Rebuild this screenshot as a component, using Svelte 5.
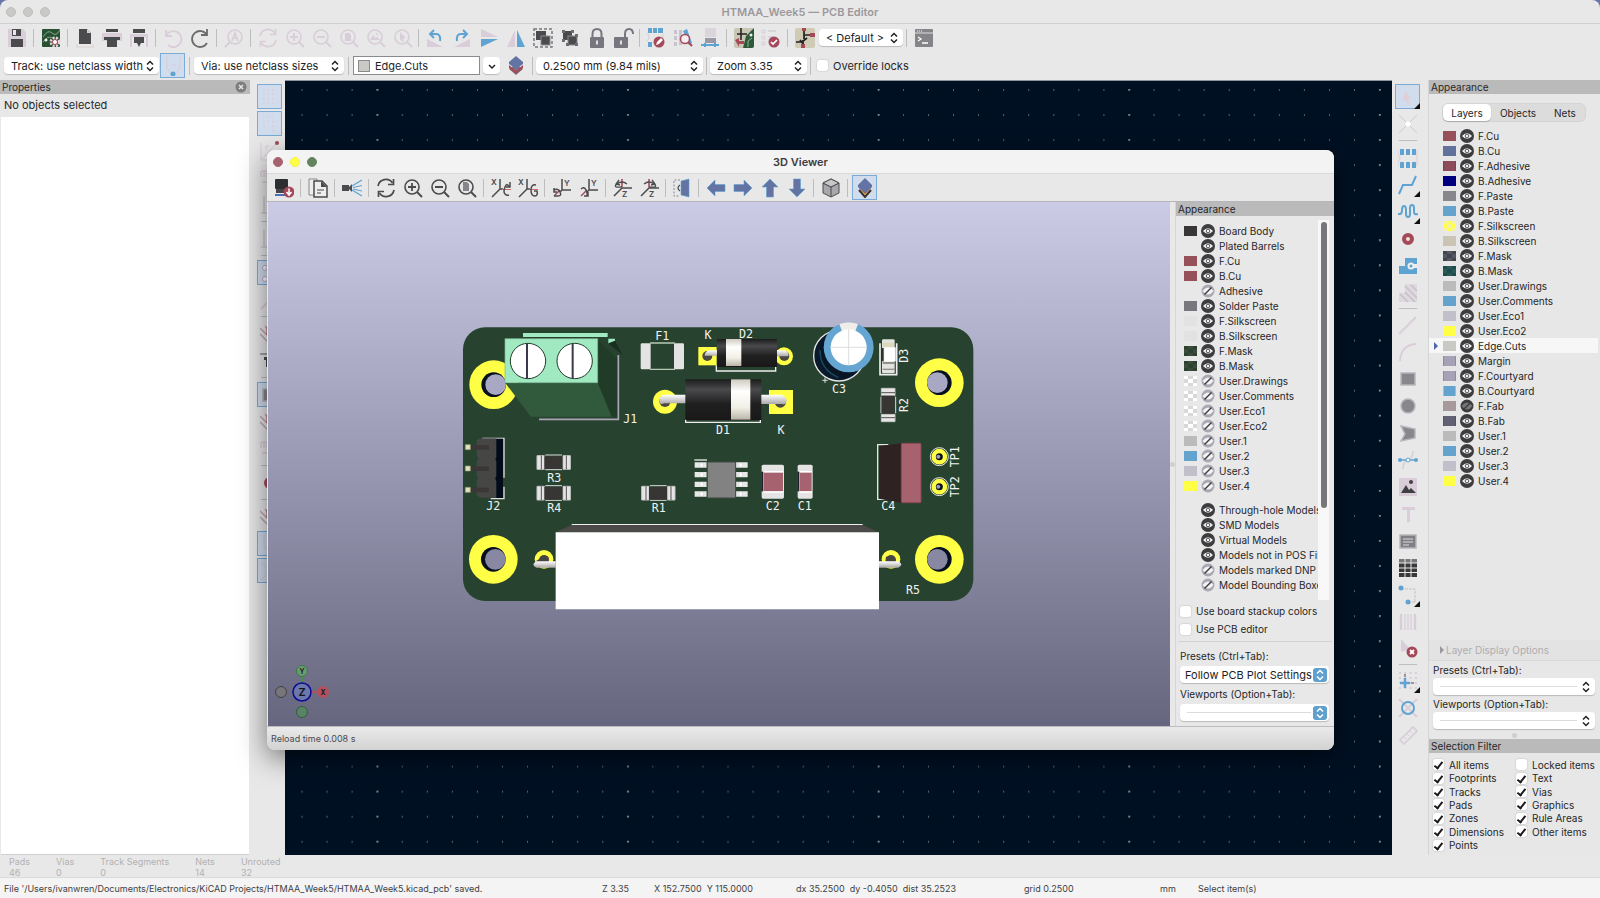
<script lang="ts">
  type Layer = { name: string; color?: string; edge?: string; pattern?: string; hidden?: boolean; active?: boolean };

  const DARK = '#4b4b4d';
  const PALE = '#d8cdd8';
  const BLUE = '#5fa3d2';
  const NAVY = '#6273a4';
  const RED = '#a5495a';

  const lens = (color: string, inner: string) =>
    `<circle cx="9" cy="9" r="7" fill="none" stroke="${color}" stroke-width="1.6"/><path d="M14 14l5 5" stroke="${color}" stroke-width="2"/>${inner}`;
  const arrows = (color: string) =>
    `<path d="M2 8a8 8 0 0 1 14.500-3M18 12a8 8 0 0 1-14.500 3" fill="none" stroke="${color}" stroke-width="1.700"/><path d="M17.500 1v5.500H12M2.500 19v-5.500H8" fill="none" stroke="${color}" stroke-width="1.700"/>`;
  const axes = (letter: string, x: number, y: number, lines: string, curl: string) =>
    `<path d="${lines}" fill="none" stroke="${DARK}" stroke-width="1.500"/><text x="${x}" y="${y}" font-size="8" font-weight="600" font-family="Inter, sans-serif" fill="${DARK}">${letter}</text>${curl}`;
  const curlX = (flip: boolean) =>
    `<path d="M11 11.500h9" stroke="#d06a6a" stroke-width="1.200"/><path d="${flip ? 'M18 7q-5-1-5 5t4 6q3 0 2-5h-3' : 'M18 9q-2-5-4 0t0 7 4 1M19 4v5h-4'}" fill="none" stroke="${DARK}" stroke-width="1.500"/>`;
  const curlY = (flip: boolean) =>
    `<path d="M2 18l6-6" stroke="${RED}" stroke-width="1.400"/><path d="${flip ? 'M2 11q3-3 5 1t1 6M5 18h4v-4' : 'M2 12q4-2 6 2t-2 4l-4 0M2 10v4h3'}" fill="none" stroke="${DARK}" stroke-width="1.500"/>`;
  const curlZ = (flip: boolean) =>
    `<path d="M9 1v8" stroke="${RED}" stroke-width="1.600"/><path d="${flip ? 'M4 6q5-4 10 0t-5 3M12 2l3 4-4 1' : 'M14 6q-5-4-10 0t5 3M6 2L3 6l4 1'}" fill="none" stroke="${DARK}" stroke-width="1.300"/>`;
  const bigArrow = (turn: number) =>
    `<path transform="rotate(${turn} 10 10)" d="M1 10l8-8v4.500h10v7H9V18z" fill="${NAVY}" stroke="${BLUE}" stroke-width=".6"/>`;
  const padlock = (shackle: string) =>
    `<path d="${shackle}" fill="none" stroke="#77767e" stroke-width="2"/><rect x="3" y="9" width="14" height="11" rx="1" fill="#77767e"/><path d="M10 12.500v4" stroke="#eee" stroke-width="1.800"/>`;

  const icons: Record<string, string> = {
    save: `<path d="M1 1h15l3 3v15H1z" fill="${PALE}"/><path d="M5 1h9v7H5zM4 11h12v8H4z" fill="${DARK}"/><path d="M6 2h3v5H6z" fill="#e8e8e8"/>`,
    setup: `<rect x="1" y="1" width="18" height="18" rx="1" fill="#285033"/><path d="M2 9q5-8 9-4t8-3M2 14q5-7 9-4" fill="none" stroke="#86a88a"/><circle cx="5" cy="12" r="1.500" fill="#eee"/><circle cx="14" cy="14" r="4" fill="none" stroke="#e5d6da" stroke-width="3" stroke-dasharray="2 1.200"/><circle cx="14" cy="14" r="2.500" fill="#fff" stroke="${RED}"/>`,
    page: `<path d="M4 1h8l4 4v11H4z" fill="${DARK}"/><path d="M12 1v4h4" fill="#d5d0d5"/><path d="M1 19h18M2 16v3M18 16v3" stroke="#ddd0d2"/>`,
    print: `<path d="M4 1h12v3H4z" fill="${DARK}"/><path d="M0 5h20v8H0z" fill="${PALE}"/><path d="M2 9h16v3H2zM5 12h10v7H5z" fill="${DARK}"/>`,
    plot: `<path d="M4 1h12v4H4zM5 8h10v7H5z" fill="${DARK}"/><path d="M1 6h18v3H1zM1 9h2v10H1zM17 9h2v10h-2z" fill="${PALE}"/><path d="M8 15h4l-2 4z" fill="${DARK}"/>`,
    undo: `<path d="M3 2v6h6M3 8a8 8 0 1 1 2 9" fill="none" stroke="${PALE}" stroke-width="1.800"/>`,
    redo: `<path d="M17 1v6h-6M17 7a8 8 0 1 0 0 8" fill="none" stroke="#6b6b6e" stroke-width="1.800"/>`,
    find: `<circle cx="11" cy="9" r="7" fill="none" stroke="${PALE}" stroke-width="1.600"/><path d="M6 14l-5 5" stroke="${PALE}" stroke-width="2"/><path d="M8 13l3-8 3 8M9 10h4" fill="none" stroke="${PALE}" stroke-width="1.700"/>`,
    refresh: arrows(PALE),
    zoomIn: lens(PALE, `<path d="M5 9h8M9 5v8" stroke="${PALE}" stroke-width="1.800"/>`),
    zoomOut: lens(PALE, `<path d="M5 9h8" stroke="${PALE}" stroke-width="1.800"/>`),
    zoomPage: lens(PALE, `<path d="M6 5h4l2 2v6H6z" fill="${PALE}"/>`),
    zoomObjects: lens(PALE, `<path d="M4 12l3-5 2 3 2-1 3 3z" fill="${PALE}"/><circle cx="11" cy="6" r="1" fill="${PALE}"/>`),
    zoomSelection: lens(PALE, `<path d="M7 4l6 6-3 .4 1 3-1.500.6-1-3L7 13z" fill="${PALE}"/>`),
    rotateLeft: `<path d="M2 11v8h16z" fill="${PALE}"/><path d="M6 6h5q5 0 4 7M9 2L5 6l4 4" fill="none" stroke="${BLUE}" stroke-width="2"/>`,
    rotateRight: `<path d="M18 11v8H2z" fill="${PALE}"/><path d="M14 6H9q-5 0-4 7M11 2l4 4-4 4" fill="none" stroke="${BLUE}" stroke-width="2"/>`,
    flipV: `<path d="M2 1v8l17 0z" fill="${PALE}"/><path d="M2 19v-8h17z" fill="${BLUE}"/>`,
    flipH: `<path d="M1 19h8V2z" fill="${PALE}"/><path d="M19 19h-8V2z" fill="${BLUE}"/>`,
    group: `<rect x="1" y="1" width="18" height="18" fill="none" stroke="#77767e" stroke-width="1.500" stroke-dasharray="3 2"/><rect x="3" y="3" width="10" height="9" fill="${DARK}"/><rect x="8" y="8" width="9" height="9" fill="${DARK}" stroke="#8b898f"/>`,
    ungroup: `<rect x="3" y="3" width="9" height="9" fill="${DARK}"/><rect x="8" y="8" width="9" height="9" fill="${DARK}" stroke="#8b898f"/><path d="M2 2h3v3H2zM11 2h3v3h-3zM2 11h3v3H2zM15 6h3v3h-3zM6 15h3v3H6zM15 15h3v3h-3z" fill="#6d6c73"/>`,
    lock: padlock('M5.500 10V6q0-5 4.500-5t4.500 5v4'),
    unlock: padlock('M11 10V6q0-5 4-5t4 5').replace('x="3"', 'x="0"').replace('M10 12', 'M7 12'),
    footprintEdit: `<path d="M2 0h4v5H2zM7 0h4v5H7zM12 0h5v5h-5zM2 14h4v5H2z" fill="${BLUE}"/><path d="M1 5q4 4 0 8M17 6v4" fill="none" stroke="${PALE}"/><circle cx="13" cy="14" r="5.500" fill="${RED}"/><path d="M10 17l1-3 4-4 2 2-4 4z" fill="#fff"/>`,
    footprintFind: `<path d="M1 2h3v4H1zM1 8h3v4H1zM1 14h3v4H1zM6 2h3v15H6z" fill="#c9c3cf"/><path d="M10 3l4-2 5 14-3 2z" fill="${BLUE}"/><circle cx="12" cy="11" r="4.500" fill="#f6eeee" stroke="${RED}" stroke-width="1.500"/><path d="M15 14l4 4" stroke="${RED}" stroke-width="2"/>`,
    footprintLib: `<path d="M5 0h11v9H5z" fill="#d9d5da"/><path d="M5 10h11v5H5z" fill="#9a98a5"/><path d="M1 17h18M5 15v4M15 15v4" stroke="${BLUE}" stroke-width="2"/>`,
    schematicSync: `<rect width="20" height="20" rx="2" fill="#c9c6b6"/><path d="M12 8l8-8v18a2 2 0 0 1-2 2H9z" fill="#2d5b3a"/><path d="M7 0v6M3 6h10M7 6v6" stroke="#222" stroke-width="1.600"/><path d="M1 12l4-2v3h5v3H5v3z" fill="${RED}"/><circle cx="17" cy="7" r="1.500" fill="#eee"/><path d="M14 19v-6l4-3" stroke="#8fb294" fill="none"/>`,
    drc: `<path d="M1 2h3v3H1zM1 8h3v3H1zM1 14h3v3H1z" fill="none" stroke="${PALE}"/><path d="M7 3h8M7 9h6" stroke="${PALE}" stroke-width="1.600"/><circle cx="13" cy="14" r="5.500" fill="${RED}"/><path d="M10 14l2 2 4-4" fill="none" stroke="#fff" stroke-width="1.700"/>`,
    schematic: `<rect width="20" height="20" rx="2" fill="#cfcbb4"/><path d="M9 3v8M9 7h7M1 14h6l5-4M8 12v6M5 12l4 5" fill="none" stroke="#222" stroke-width="1.700"/><path d="M7 0h4v3H7zM15 5h5v4h-5zM6 16h4v4H6z" fill="${RED}"/>`,
    terminal: `<rect x="1" y="1" width="18" height="18" rx="1" fill="#858589"/><path d="M1 5h18" stroke="#ddd"/><path d="M3 3h1M5 3h1M7 3h1" stroke="#fff"/><path d="M4 9l3 2-3 2M8 15h6" fill="none" stroke="#fff" stroke-width="1.300"/>`,
    autoWidth: `<path d="M4 1v11l4 5h5l4-5V1M8 9h5" fill="none" stroke="#d9cde0" stroke-width="1.200"/><circle cx="10" cy="18" r="2.500" fill="${BLUE}"/>`,
    layerPair: `<path d="M3 13l7 6 7-6-7-5z" fill="#77767e"/><path d="M3 9l7 6 7-6v3l-7 6-7-6z" fill="${RED}"/><path d="M3 6l7-6 7 6v2l-7 5-7-5z" fill="${NAVY}"/>`,
    reload: `<rect x="1" y="1" width="13" height="10" rx="1" fill="#2d2e31"/><path d="M2 11h11v4H2z" fill="#44464a"/><path d="M1 17h11" stroke="#4d73b4" stroke-width="2"/><circle cx="15" cy="14" r="5.500" fill="${RED}"/><path d="M15 10.500v6M12.500 14l2.500 3 2.500-3" fill="none" stroke="#fff" stroke-width="1.500"/>`,
    copy: `<path d="M1 1h8v16H1z" fill="#eee" stroke="#888"/><path d="M6 3h8l5 5v11H6z" fill="#eee" stroke="${DARK}" stroke-width="1.500"/><path d="M13 3v6h6" fill="${DARK}"/><path d="M9 12h7M9 15h4" stroke="${DARK}"/>`,
    raytrace: `<path d="M0 7h7v6H0zM7 9l3-3v8l-3-3z" fill="${DARK}"/><path d="M10 8l10-6M11 9.500l9-2M11 11l9 2M10 12l10 6" stroke="${BLUE}" stroke-width="1.200"/>`,
    redraw: arrows(DARK),
    viewIn: lens(DARK, `<path d="M5 9h8M9 5v8" stroke="${DARK}" stroke-width="1.800"/>`),
    viewOut: lens(DARK, `<path d="M5 9h8" stroke="${DARK}" stroke-width="1.800"/>`),
    viewFit: lens(DARK, `<path d="M6 4h4l2 2v7H6z" fill="#85858a"/>`),
    rotX1: axes('X', 0, 7, 'M9 1v10M9 11l-8 8M9 11h3', curlX(false)),
    rotX2: axes('X', 0, 7, 'M9 1v10M9 11l-8 8M9 11h3', curlX(true)),
    rotY1: axes('Y', 12, 8, 'M10 1v11M10 12h9M10 12l-2 2', curlY(false)),
    rotY2: axes('Y', 12, 8, 'M10 1v11M10 12h9M10 12l-2 2', curlY(true)),
    rotZ1: axes('Z', 9, 19, 'M1 18l8-8h10', curlZ(false)),
    rotZ2: axes('Z', 9, 19, 'M1 18l8-8h10', curlZ(true)),
    flipBoard: `<path d="M8 2H2v16h6" fill="none" stroke="#88868f" stroke-dasharray="2 1.500"/><path d="M9 3l8-2v18l-8-2z" fill="${NAVY}" stroke="${BLUE}" stroke-width=".6"/><path d="M8 7q-4 3 0 6" fill="none" stroke="${DARK}" stroke-width="1.300"/>`,
    left: bigArrow(0),
    right: bigArrow(180),
    up: bigArrow(90),
    down: bigArrow(270),
    ortho: `<path d="M10 1l8 4v10l-8 4-8-4V5z" fill="#a9a7ab" stroke="${DARK}"/><path d="M2 5l8 4 8-4M10 9v10" fill="none" stroke="${DARK}"/><path d="M2 5l8-4 8 4-8 4z" fill="#c8c6c9" stroke="${DARK}"/>`,
    layersPanel: `<path d="M4 12l6 7 6-7" fill="#e3c94d" stroke="#3a3232" stroke-width="2"/><path d="M4 10l6 6 6-6" fill="${RED}"/><path d="M3 7l7-7 7 7v2l-7 6-7-6z" fill="${NAVY}"/>`,
    grid: `<path d="M3 3h14M3 7.500h14M3 12h14M3 16.500h14" stroke="#dac9d8" stroke-width="1.500" stroke-dasharray="1.500 3"/>`,
    gridOverride: `<path d="M3 3h10M3 7.500h14M3 12h2M12 12h5M12 16.500h5" stroke="#dac9d8" stroke-width="1.500" stroke-dasharray="1.500 3"/>`,
    polar: `<path d="M1 2v17h17M1 19L16 3M6 5h3M6 5v4" fill="none" stroke="${PALE}"/><circle cx="17" cy="2" r="2" fill="${RED}"/>`,
    units: `<path d="M1 9V4q2-2 3 0v5M4 4q2-2 3 0v5M2 14h9" fill="none" stroke="${PALE}" stroke-width="1.500"/>`,
    cursor: `<path d="M4 1v17M1 18h17" fill="none" stroke="#cbc6d6" stroke-width="1.500"/>`,
    ratsnest: `<circle cx="5" cy="5" r="2.500" fill="#fff" stroke="#b6a9c9"/><circle cx="5" cy="16" r="2.500" fill="#fff" stroke="#b6a9c9"/><path d="M5 5l12 9" stroke="#b6a9c9"/>`,
    hatch: `<path d="M0 4l10 10M0 10l9 9M5 2l12 12" stroke="#b9a8ae" stroke-width="1.500"/><path d="M7 3v8" stroke="${RED}"/>`,
    pad: `<path d="M0 3h16" stroke="#5b5b5b"/><path d="M4 6h5v10H6V9H4z" fill="${DARK}"/>`,
    select: `<path d="M7 4l7 8-4 0 2 5-2 .8-2-5-3 2z" fill="#e0cfd9"/>`,
    highlight: `<path d="M1 1l18 18M19 1L1 19" stroke="#cfcbcb"/><circle cx="10" cy="10" r="2.500" fill="#fff"/>`,
    addFootprint: `<path d="M2 1h4v6H2zM8 1h4v6H8zM14 1h4v6h-4zM2 14h4v6H2zM8 14h4v6H8zM14 14h4v6h-4z" fill="${BLUE}"/><path d="M0 2v4q4 4 0 8v4M19 2v16" fill="none" stroke="${PALE}"/>`,
    route: `<path d="M1 19l4-9h9l4-9" fill="none" stroke="${BLUE}" stroke-width="2"/>`,
    tune: `<path d="M0 12h2q2 0 2-4t2-4 2 4v4q0 3 2 3t2-3V6q0-3 2-3t2 3v4q0 3 4 2" fill="none" stroke="${BLUE}" stroke-width="2"/>`,
    via: `<circle cx="10" cy="10" r="4" fill="#ece4d0" stroke="${RED}" stroke-width="4"/>`,
    zone: `<path d="M7 2h12v16H1V10h6z" fill="${BLUE}"/><circle cx="13" cy="10" r="3.500" fill="#eee"/><path d="M13 8h6v4h-6z" fill="#eee"/><circle cx="13" cy="10" r="1.500" fill="${BLUE}"/>`,
    ruleArea: `<path d="M7 1h12v18H1V10h6z" fill="#ded9de"/><path d="M7 3l12 12M7 9l10 10M2 11l8 8M13 2l6 6" stroke="#c8bfc8" stroke-width="1.500"/>`,
    line: `<path d="M1 19L18 2" stroke="${PALE}" stroke-width="1.800"/>`,
    arc: `<path d="M2 19Q3 3 18 2" fill="none" stroke="${PALE}" stroke-width="1.800"/>`,
    rect: `<rect x="3" y="4" width="14" height="12" fill="#88888c" stroke="#b8b4bc" stroke-width="1.500"/>`,
    circle: `<circle cx="10" cy="10" r="7" fill="#88888c" stroke="#b8b4bc" stroke-width="1.500"/>`,
    polygon: `<path d="M3 3l14 3v9L3 18l4-7z" fill="#88888c" stroke="#b8b4bc" stroke-width="1.500"/>`,
    bezier: `<path d="M5 19q0-7 5-9t5-9" fill="none" stroke="${PALE}" stroke-width="1.500"/><path d="M2 10h16" stroke="${BLUE}" stroke-width="1.500"/><circle cx="2" cy="10" r="2" fill="${BLUE}"/><circle cx="10" cy="10" r="2" fill="#fff" stroke="${BLUE}"/><circle cx="18" cy="10" r="2" fill="${BLUE}"/>`,
    image: `<rect x="1" y="1" width="18" height="18" rx="1" fill="${PALE}"/><path d="M3 16l5-8 3 5 2-2 5 5z" fill="#3f3f41"/><circle cx="13" cy="5" r="2" fill="#3f3f41"/>`,
    text: `<path d="M4 3h13v3h-5v12H9V6H4z" fill="${PALE}"/>`,
    textBox: `<rect x="2" y="4" width="16" height="13" fill="#7f7f84" stroke="#b8b4bc" stroke-width="1.500"/><path d="M5 8h10M5 11h10M5 14h6" stroke="#ddd"/>`,
    table: `<path d="M1 1h18v18H1z" fill="#39393b"/><path d="M1 1h18v4H1z" fill="#77767a"/><path d="M1 5h18M1 10h18M1 14.500h18M7 1v18M13 1v18" stroke="#e8e8e8"/>`,
    dimension: `<path d="M3 4h14v14M10 17h7" fill="none" stroke="#c9c1c5" stroke-dasharray="3 1"/><circle cx="3" cy="3" r="2.500" fill="${BLUE}"/><circle cx="10" cy="17" r="2.500" fill="${BLUE}"/>`,
    barcode: `<path d="M3 2v16M17 2v16" stroke="${PALE}" stroke-width="2.500"/><path d="M7 2v16M10 2v16M13 2v16" stroke="${PALE}" stroke-width="1.200"/>`,
    remove: `<path d="M3 0l9 10-9 3z" fill="${PALE}"/><circle cx="14" cy="13" r="5.500" fill="${RED}"/><path d="M12 11l4 4M16 11l-4 4" stroke="#fff" stroke-width="1.800"/>`,
    origin: `<path d="M1 2h18M1 7h18M1 12h18M1 17h18" stroke="${PALE}" stroke-width="1.800" stroke-dasharray="2 3.300"/><path d="M7 7v10M2 12h10" stroke="${BLUE}" stroke-width="2.500"/><path d="M7 3v3M13 12h3" stroke="${DARK}"/>`,
    drill: `<path d="M1 1l18 18M19 1L1 19" stroke="${PALE}" stroke-width="1.800"/><circle cx="10" cy="10" r="6" fill="none" stroke="${BLUE}" stroke-width="2"/>`,
    measure: `<path d="M2 15L15 2l4 4L6 19z" fill="none" stroke="${PALE}" stroke-width="1.600"/><path d="M6 12l2 2M9 9l2 2M12 6l2 2" stroke="${PALE}"/>`,
  };

  // '|' is a separator, '/' a narrow one
  const mainTools = ['save', '|', 'setup', '|', 'page', 'print', 'plot', '|', 'undo', 'redo', '|', 'find', '|', 'refresh', 'zoomIn', 'zoomOut', 'zoomPage', 'zoomObjects', 'zoomSelection', '/', 'rotateLeft', 'rotateRight', 'flipV', 'flipH', 'group', 'ungroup', 'lock', 'unlock', '/', 'footprintEdit', 'footprintFind', 'footprintLib', '|', 'schematicSync', 'drc', '|', 'schematic'];
  const viewerTools = ['reload', '|', 'copy', '|', 'raytrace', '|', 'redraw', 'viewIn', 'viewOut', 'viewFit', '|', 'rotX1', 'rotX2', '|', 'rotY1', 'rotY2', '|', 'rotZ1', 'rotZ2', '/', 'flipBoard', '|', 'left', 'right', 'up', 'down', '|', 'ortho', '|', 'layersPanel*'];
  const leftTools = ['grid*', 'gridOverride*', 'polar', 'units', 'cursor', '|', 'cursor', '|', 'ratsnest*', 'line', '|', 'hatch', 'pad', '|', 'rect*', 'hatch', 'units', '|', 'via', '|', 'hatch', 'autoWidth*', 'highlight*'];
  const rightTools = ['select*+', 'highlight', '|', 'addFootprint', 'route+', 'tune+', 'via', 'zone', 'ruleArea', '/', 'line', 'arc', 'rect', 'circle', 'polygon', 'bezier', 'image', 'text', 'textBox', 'table', 'dimension+', 'barcode', 'remove', '/', 'origin+', 'drill', 'measure'];

  const layers: Layer[] = [
    { name: 'F.Cu', color: '#96505a' },
    { name: 'B.Cu', color: '#61719c' },
    { name: 'F.Adhesive', color: '#8d4c59', edge: '#555266' },
    { name: 'B.Adhesive', color: '#00007f' },
    { name: 'F.Paste', color: '#88888c' },
    { name: 'B.Paste', color: '#65a3cf' },
    { name: 'F.Silkscreen', color: '#f6f3a0', edge: '#ffff4c', pattern: '#ffff4c' },
    { name: 'B.Silkscreen', color: '#c9c4b3' },
    { name: 'F.Mask', color: '#43444d', pattern: '#555763' },
    { name: 'B.Mask', color: '#1d4c52', pattern: '#2b5b51' },
    { name: 'User.Drawings', color: '#bbbbbb' },
    { name: 'User.Comments', color: '#65a3cf' },
    { name: 'User.Eco1', color: '#c0bfca' },
    { name: 'User.Eco2', color: '#ffff45' },
    { name: 'Edge.Cuts', color: '#c9c9c6', active: true },
    { name: 'Margin', color: '#a7a1b8', edge: '#b17c94' },
    { name: 'F.Courtyard', color: '#a7a1b8', edge: '#b17c94' },
    { name: 'B.Courtyard', color: '#65a3cf', edge: '#79d8b2' },
    { name: 'F.Fab', color: '#a89a9c', edge: '#9d9aa8', hidden: true },
    { name: 'B.Fab', color: '#626173', edge: '#54536d' },
    { name: 'User.1', color: '#bbbbbb' },
    { name: 'User.2', color: '#65a3cf' },
    { name: 'User.3', color: '#c0bfca' },
    { name: 'User.4', color: '#ffff45' },
  ];

  const viewerLayers: Layer[] = [
    { name: 'Board Body', color: '#383636' },
    { name: 'Plated Barrels' },
    { name: 'F.Cu', color: '#96505a' },
    { name: 'B.Cu', color: '#96505a' },
    { name: 'Adhesive', hidden: true },
    { name: 'Solder Paste', color: '#78777d' },
    { name: 'F.Silkscreen', color: '#e2e2e2' },
    { name: 'B.Silkscreen', color: '#e2e2e2' },
    { name: 'F.Mask', color: '#2c4230', pattern: '#3a4a3b' },
    { name: 'B.Mask', color: '#2c4230', pattern: '#3a4a3b' },
    { name: 'User.Drawings', color: '#ffffff', pattern: '#d8d8d8', hidden: true },
    { name: 'User.Comments', color: '#ffffff', pattern: '#d8d8d8', hidden: true },
    { name: 'User.Eco1', color: '#ffffff', pattern: '#d8d8d8', hidden: true },
    { name: 'User.Eco2', color: '#ffffff', pattern: '#d8d8d8', hidden: true },
    { name: 'User.1', color: '#bbbbbb', hidden: true },
    { name: 'User.2', color: '#65a3cf', hidden: true },
    { name: 'User.3', color: '#c0bfca', hidden: true },
    { name: 'User.4', color: '#ffff45', hidden: true },
  ];
  const models: Layer[] = [
    { name: 'Through-hole Models' },
    { name: 'SMD Models' },
    { name: 'Virtual Models' },
    { name: 'Models not in POS File' },
    { name: 'Models marked DNP', hidden: true },
    { name: 'Model Bounding Boxes', hidden: true },
  ];

  const filters = ['All items', 'Locked items', 'Footprints', 'Text', 'Tracks', 'Vias', 'Pads', 'Graphics', 'Zones', 'Rule Areas', 'Dimensions', 'Other items', 'Points'];
  const counts = [['Pads', 46], ['Vias', 0], ['Track Segments', 0], ['Nets', 14], ['Unrouted', 32]];

  // x, y of the centre and the text, in board units
  const refs: [string, number, number, boolean?][] = [
    ['F1', 622, 77], ['K', 759, 75], ['D2', 873, 72], ['J1', 526, 326], ['R3', 298, 502], ['J2', 115, 587],
    ['R4', 298, 593], ['R1', 611, 593], ['D1', 804, 359], ['K', 978, 359], ['C3', 1152, 237], ['D3', 1345, 137, true],
    ['R2', 1345, 285, true], ['TP1', 1499, 440, true], ['TP2', 1499, 530, true], ['C2', 953, 587], ['C1', 1049, 587],
    ['C4', 1300, 587], ['R5', 1374, 838],
  ];
  const holes = [[116, 224, 6], [1453, 218, -6], [115, 748, 6], [1453, 748, -6]];
  const resistors = [[297, 457, 0], [297, 549, 0], [611, 549, 0], [1300, 286, 90]];
</script>

{#snippet tool(spec: string)}
  {@const name = spec.replace(/[*+]/g, '')}
  {#if spec === '|' || spec === '/'}
    <span class="sep" class:tight={spec === '/'}></span>
  {:else}
    <button type="button" class="tool" class:on={spec.includes('*')} class:more={spec.includes('+')} aria-label={name}>
      <svg viewBox="0 0 20 20" width="20" height="20">{@html icons[name]}</svg>
    </button>
  {/if}
{/snippet}

{#snippet picker(label: string, value: string, blue: boolean)}
  <span class="picker" class:blue>
    <select aria-label={label}><option>{value}</option></select>
    {#if !value}<i class="blank"></i>{/if}
    <svg class="chevrons" viewBox="0 0 14 14" width="14" height="14">
      <path d="M4 5.500L7 2.500l3 3M4 8.500l3 3 3-3" />
    </svg>
  </span>
{/snippet}

{#snippet layerRow(layer: Layer)}
  <li class="layer" class:active={layer.active}>
    {#if layer.pattern}
      <svg class="checker" viewBox="0 0 13 10" width="13" height="10">
        <rect width="13" height="10" fill={layer.color} />
        <path d="M4 0h5v3H4zM0 3h4v4H0zM9 3h4v4H9zM4 7h5v3H4z" fill={layer.pattern} />
      </svg>
    {:else}
      <i class="swatch" style="background: {layer.color ?? 'transparent'}; border-color: {layer.edge ?? layer.color ?? 'transparent'}"></i>
    {/if}
    <button type="button" class="eye" aria-label="Toggle {layer.name}">
      <svg viewBox="0 0 14 14" width="14" height="14">
        {#if layer.hidden}
          <circle cx="7" cy="7" r="6.500" fill={layer.name === 'F.Fab' ? '#3d3d3f' : '#aaa8b2'} />
          <path d="M1.500 7Q7 0 12.500 7Q7 14 1.500 7z" fill={layer.name === 'F.Fab' ? '#77777a' : '#f4f4f6'} />
          <path d="M3.500 10.500l7-7" stroke="#3d3d3f" stroke-width="1.500" />
        {:else}
          <circle cx="7" cy="7" r="7" fill="#3d3d3f" />
          <path d="M2 7Q7 1.500 12 7Q7 12.500 2 7z" fill="#f4f4f6" />
          <circle cx="7" cy="7" r="1.800" fill="none" stroke="#55555a" />
        {/if}
      </svg>
    </button>
    <span>{layer.name}</span>
  </li>
{/snippet}

<div class="editor">
  <header class="titlebar">
    <i></i><i></i><i></i>
    <h1>HTMAA_Week5 — PCB Editor</h1>
  </header>

  <div class="toolbar">
    {#each mainTools as spec}{@render tool(spec)}{/each}
    <div class="variant">{@render picker('Design variant', '< Default >', false)}</div>
    {@render tool('|')}
    {@render tool('terminal')}
  </div>

  <div class="toolbar options">
    <div class="track">{@render picker('Track width', 'Track: use netclass width', false)}</div>
    {@render tool('autoWidth*')}
    {@render tool('|')}
    <div class="via">{@render picker('Via size', 'Via: use netclass sizes', false)}</div>
    <span class="sep"></span>
    <button type="button" class="layer-box"><i></i>Edge.Cuts</button>
    <button type="button" class="drop" aria-label="Choose layer">
      <svg viewBox="0 0 10 10" width="10" height="10"><path d="M2 4l3 3 3-3" /></svg>
    </button>
    {@render tool('layerPair')}
    <span class="sep"></span>
    <div class="grid-size">{@render picker('Grid', '0.2500 mm (9.84 mils)', false)}</div>
    <span class="sep"></span>
    <div class="zoom">{@render picker('Zoom', 'Zoom 3.35', false)}</div>
    <span class="sep"></span>
    <label class="check"><input type="checkbox" />Override locks</label>
  </div>

  <main class="workspace">
    <section class="properties">
      <h2>Properties<button type="button" aria-label="Close">
        <svg viewBox="0 0 12 12" width="12" height="12"><circle cx="6" cy="6" r="5.500" fill="#7d7d80" /><path d="M4 4l4 4M8 4l-4 4" stroke="#e6e6e6" stroke-width="1.500" /></svg>
      </button></h2>
      <p>No objects selected</p>
      <div class="sheet"></div>
    </section>

    <nav class="side left">
      {#each leftTools as spec}{@render tool(spec)}{/each}
    </nav>

    <div class="canvas">
      <svg width="100%" height="100%">
        <defs>
          <pattern id="dots" x="16.500" y="8" width="25.060" height="25.060" patternUnits="userSpaceOnUse">
            <rect width="1" height="2" fill="#5b6066" />
          </pattern>
          <pattern id="major" x="91.500" y="8" width="250.600" height="25.060" patternUnits="userSpaceOnUse">
            <rect width="2" height="1.500" fill="#85878a" />
          </pattern>
        </defs>
        <rect width="100%" height="100%" fill="url(#dots)" />
        <rect width="100%" height="100%" fill="url(#major)" />
      </svg>
    </div>

    <nav class="side right">
      {#each rightTools as spec}{@render tool(spec)}{/each}
    </nav>

    <aside class="appearance">
      <h2>Appearance</h2>
      <div class="tabs">
        <button type="button" class="current">Layers</button>
        <button type="button">Objects</button>
        <button type="button">Nets</button>
      </div>
      <ul>
        {#each layers as layer}{@render layerRow(layer)}{/each}
      </ul>
      <button type="button" class="display-options">
        <svg viewBox="0 0 6 8" width="6" height="8"><path d="M1 0l4 4-4 4z" fill="#9a989c" /></svg>Layer Display Options
      </button>
      <div class="presets">
        <span>Presets (Ctrl+Tab):</span>
        {@render picker('Presets', '', false)}
        <span>Viewports (Option+Tab):</span>
        {@render picker('Viewports', '', false)}
      </div>
      <i class="grip"></i>
      <h2>Selection Filter</h2>
      <div class="filters">
        {#each filters as filter}
          <label class="check"><input type="checkbox" checked={filter !== 'Locked items'} />{filter}</label>
        {/each}
      </div>
    </aside>
  </main>

  <dl class="counts">
    {#each counts as [name, value]}
      <div><dt>{name}</dt><dd>{value}</dd></div>
    {/each}
  </dl>

  <footer class="status">
    <span>File '/Users/ivanwren/Documents/Electronics/KiCAD Projects/HTMAA_Week5/HTMAA_Week5.kicad_pcb' saved.</span>
    <span>Z 3.35</span>
    <span>X 152.7500&nbsp; Y 115.0000</span>
    <span>dx 35.2500&nbsp; dy -0.4050&nbsp; dist 35.2523</span>
    <span>grid 0.2500</span>
    <span>mm</span>
    <span>Select item(s)</span>
  </footer>

  <section class="viewer">
    <header class="titlebar">
      <i class="close"></i><i class="minimise"></i><i class="zoom-btn"></i>
      <h1>3D Viewer</h1>
    </header>
    <div class="toolbar">
      {#each viewerTools as spec}{@render tool(spec)}{/each}
    </div>

    <div class="viewer-body">
      <div class="scene">
        <svg viewBox="268 202 902 524" width="100%" height="100%">
          <defs>
            <linearGradient id="barrel" x2="0" y2="1">
              <stop offset="0" stop-color="#1c1c1d" /><stop offset=".25" stop-color="#4a4a4c" />
              <stop offset=".6" stop-color="#202021" /><stop offset="1" stop-color="#1a1718" />
            </linearGradient>
            <linearGradient id="band" x2="0" y2="1">
              <stop offset="0" stop-color="#cfcbbf" /><stop offset=".3" stop-color="#ffffff" />
              <stop offset=".7" stop-color="#f1efe6" /><stop offset="1" stop-color="#b9b5a8" />
            </linearGradient>
            <linearGradient id="lead" x2="0" y2="1">
              <stop offset="0" stop-color="#ffffff" /><stop offset="1" stop-color="#a9a6a6" />
            </linearGradient>
          </defs>

          <g transform="translate(455 310) scale(.33333)">
            <rect x="24" y="52" width="1531" height="821" rx="66" fill="#27432f" />

            {#each holes as [x, y, shift]}
              <circle cx={x} cy={y} r="73" fill="#ffff45" />
              <circle cx={x} cy={y} r="37" fill="#07101f" />
              <circle cx={x + shift} cy={y} r="31" fill={y < 400 ? '#a9a8c4' : '#8988a2'} />
            {/each}

            <!-- terminal block -->
            <path d="M204 69h254v12H204z" fill="#a0e9c1" />
            <path d="M428 90l62 60v170l-20 0-42-102z" fill="#203c28" />
            <path d="M150 218h278l42 102H228z" fill="#305a3b" />
            <path d="M150 86h278v132H150z" fill="#a0e9c1" stroke="#7fb79a" stroke-width="2" />
            <path d="M460 86h20v22l-20-8z" fill="#a0e9c1" /><path d="M480 92l22 42-42-34z" fill="#172e20" />
            <path d="M490 135v193H252" fill="none" stroke="#a9a5b4" stroke-width="5" />
            <g fill="#fff" stroke="#22382b" stroke-width="3">
              <circle cx="219" cy="153" r="53" /><circle cx="359" cy="153" r="53" />
              <path d="M216 101v105M353 101v105" stroke="#3b3a4c" stroke-width="6" />
            </g>

            <!-- pin header -->
            <path d="M82 385h65v118M147 530v36h-40" fill="none" stroke="#ddd" stroke-width="4" />
            <path d="M122 386h22v178h-22z" fill="#020b1a" />
            <path d="M65 390l10-5h49v58l-6 4 6 6v46l-6 6 6 8v50H75l-10-8v-44l6-6-6-6v-46l6-8-6-6z" fill="#464645" />
            {#each [411, 475, 539] as y}
              <path d="M46 {y - 6}h56v14H46z" fill="#3b3736" />
              <path d="M31 {y - 7}h15v15H31z" fill="#e4e0bd" stroke="#8f9a78" stroke-width="2" />
            {/each}

            {#each resistors as [x, y, turn]}
              <g transform="translate({x} {y}) rotate({turn})">
                <path d="M-51-20h22v41h-22zM27-20h22v41H27z" fill="#e6e6e6" stroke="#c5c5c5" stroke-width="3" />
                <path d="M-38-20v41M37-20v41" stroke="#54504c" stroke-width="3" />
                <path d="M-26-22h50M-26 22h50" stroke="#ddd" stroke-width="3" />
                <path d="M-29-18h54v38h-54z" fill="#383634" />
              </g>
            {/each}

            <!-- fuse -->
            <path d="M585 99h75M585 178h75" stroke="#b9c9b4" stroke-width="4" />
            <rect x="557" y="100" width="30" height="78" rx="4" fill="#e3e3e3" />
            <rect x="657" y="100" width="30" height="78" rx="4" fill="#e3e3e3" />

            <!-- small diode -->
            <path d="M730 111h55v55h-55z" fill="#ffff45" />
            <circle cx="987" cy="139" r="27" fill="#ffff45" />
            <circle cx="757" cy="138" r="15" fill="#4b4945" /><circle cx="988" cy="138" r="15" fill="#4b4945" />
            <path d="M788 121h-25q-14 4-14 16h39zM965 121h25q13 6 10 18h-35z" fill="url(#lead)" />
            <path d="M784 166v17h178v-12" fill="none" stroke="#eee" stroke-width="4" />
            <path d="M786 87h180v84H786z" fill="url(#barrel)" />
            <path d="M813 87h46v81h-46z" fill="url(#band)" />

            <!-- large diode -->
            <circle cx="630" cy="275" r="36" fill="#ffff45" />
            <path d="M942 240h72v72h-72z" fill="#ffff45" />
            <circle cx="630" cy="274" r="17" fill="#4b4945" /><circle cx="976" cy="276" r="17" fill="#4b4945" />
            <path d="M693 254h-65q-15 4-15 18t15 8h65zM915 254h65q17 8 15 20t-15 8h-65z" fill="url(#lead)" />
            <path d="M692 328v9h224v-9" fill="none" stroke="#eee" stroke-width="4" />
            <path d="M691 208h228v122H691z" fill="url(#barrel)" />
            <path d="M828 208h58v121h-58z" fill="url(#band)" />

            <!-- electrolytic capacitor -->
            <circle cx="1152" cy="137" r="76" fill="#0a1a2a" stroke="#e5e5e5" stroke-width="4" />
            <path d="M1110 80q-40 60 10 112l50 15 30-20z" fill="#081522" />
            <path d="M1095 120q0 60 55 82" fill="none" stroke="#17445a" stroke-width="5" />
            <circle cx="1181" cy="112" r="75" fill="#65a5d2" />
            <path d="M1153 42q28-10 56 0l-12 32h-32z" fill="#f0ede8" />
            <circle cx="1181" cy="112" r="54" fill="#fff" />
            <path d="M1181 58v108M1127 112h108" stroke="#ddd" stroke-width="3" />
            <path d="M1102 211h16M1110 203v16" stroke="#ddd" stroke-width="3" />

            <!-- led -->
            <path d="M1275 100v94h50v-94" fill="none" stroke="#eee" stroke-width="5" />
            <rect x="1281" y="88" width="38" height="102" rx="4" fill="#e2e2df" />
            <path d="M1283 98h34v14h-34z" fill="#dcd9ba" /><path d="M1288 112h34v42h-34z" fill="#fff" />
            <path d="M1278 114h8v40h-8z" fill="#29352c" /><path d="M1283 157h36v4h-36zM1283 176h36v3h-36z" fill="#77756d" />

            <!-- soic -->
            <path d="M718 450h38" stroke="#e8e8e8" stroke-width="4" />
            {#each [465, 494, 523, 552] as y}
              <path d="M719 {y - 8}h36v16h-36zM842 {y - 8}h36v16h-36z" fill="#e8e8e8" />
              <path d="M735 {y - 6}h10v12h-10zM852 {y - 6}h10v12h-10z" fill="#fff" stroke="#bbb" stroke-width="1" />
            {/each}
            <path d="M757 456h85v108h-85z" fill="#828282" stroke="#3e4a41" stroke-width="3" />

            <!-- ceramic capacitors -->
            {#each [[920, 67], [1028, 45]] as [x, w]}
              <rect {x} y="464" width={w} height="102" rx="5" fill="#e4e4e4" />
              <path d="M{x - 1} 485h6v59h-6z" fill="#1f1f2b" />
              <path d="M{x + 7} 488h{w - 10}v56h-{w - 10}z" fill="#a7626f" />
              <path d="M{x + 6} 485h{w - 8}M{x + 6} 546h{w - 8}" stroke="#fff" stroke-width="4" />
            {/each}

            <!-- film capacitor -->
            <path d="M1270 404h30M1268 402v166h22" fill="none" stroke="#e5e5e5" stroke-width="4" />
            <path d="M1272 408l68-8v178l-68-12z" fill="#2e2222" />
            <rect x="1339" y="400" width="59" height="178" rx="4" fill="#a7626f" stroke="#914754" stroke-width="3" />

            {#each [440, 530] as y}
              <circle cx="1453" cy={y} r="27" fill="#27432f" stroke="#e8e8e8" stroke-width="3" />
              <circle cx="1453" cy={y} r="17" fill="#07101f" stroke="#ffff45" stroke-width="13" />
              <circle cx="1450" cy={y} r="6" fill="#9d9cb5" />
            {/each}

            <!-- power resistor -->
            <circle cx="267" cy="748" r="28" fill="#ffff45" /><circle cx="1308" cy="748" r="28" fill="#ffff45" />
            <circle cx="267" cy="750" r="15" fill="#474642" /><circle cx="1308" cy="750" r="15" fill="#474642" />
            <path d="M238 759q14-16 40-20l4 6-14 10zM1293 740q20-2 28 14h-30z" fill="#474642" />
            <path d="M302 754h-58q-18 10 0 19h58zM1272 754h58q18 10 0 19h-58z" fill="url(#lead)" />
            <path d="M350 644h873" stroke="#eee" stroke-width="4" />
            <path d="M302 667l48-22h873l49 22z" fill="#4c4a48" />
            <path d="M302 667h970v231H302z" fill="#fff" />

            {#each refs as [label, x, y, upright]}
              <text class="ref" transform="translate({x} {y}) rotate({upright ? -90 : 0})" y="13">{label}</text>
            {/each}
          </g>

          <g class="gizmo">
            <path d="M302 672v20" stroke="#4c8a54" stroke-width="2" /><path d="M302 692h18" stroke="#b0525e" stroke-width="2" />
            <circle cx="302" cy="671" r="5.500" fill="#6a9a70" stroke="#3d7a46" />
            <circle cx="323" cy="692" r="6" fill="#b0525e" />
            <circle cx="281" cy="692" r="5.500" fill="#77767a" stroke="#45403f" />
            <circle cx="302" cy="712" r="5.500" fill="#5b8266" stroke="#2d6338" />
            <circle cx="302" cy="692" r="9" fill="#6c78ac" stroke="#0b0b96" stroke-width="1.500" />
            <text x="302" y="696" font-size="11">Z</text>
            <text x="302" y="674" font-size="7">Y</text>
            <text x="323" y="695" font-size="7">X</text>
          </g>
        </svg>
      </div>

      <i class="splitter"></i>

      <aside class="viewer-panel">
        <h2>Appearance</h2>
        <div class="scroller">
          <ul>
            {#each viewerLayers as layer}{@render layerRow(layer)}{/each}
            <li class="gap"></li>
            {#each models as layer}{@render layerRow(layer)}{/each}
          </ul>
          <div class="scrollbar"><i></i></div>
        </div>
        <div class="stackup">
          <label class="check"><input type="checkbox" />Use board stackup colors</label>
          <label class="check"><input type="checkbox" />Use PCB editor</label>
        </div>
        <div class="presets">
          <span>Presets (Ctrl+Tab):</span>
          {@render picker('Viewer presets', 'Follow PCB Plot Settings', true)}
          <span>Viewports (Option+Tab):</span>
          {@render picker('Viewer viewports', '', true)}
        </div>
      </aside>
    </div>

    <footer>Reload time 0.008 s</footer>
  </section>
</div>

<style>
  :global(body) {
    margin: 0;
    background: #6475a8;
  }

  .editor {
    position: relative;
    display: flex;
    flex-direction: column;
    height: 100vh;
    box-sizing: border-box;
    background: #e8e8e8;
    border-radius: 8px 8px 0 0;
    overflow: hidden;
    font-family: Inter, sans-serif;
    font-size: 10px;
    color: #262628;
  }

  button {
    padding: 0;
    border: 0;
    background: none;
    font: inherit;
    color: inherit;
  }

  svg {
    display: block;
  }

  ul {
    list-style: none;
    margin: 0;
    padding: 0;
  }

  h2 {
    display: flex;
    justify-content: space-between;
    align-items: center;
    flex: none;
    height: 14px;
    margin: 0;
    padding: 0 2px;
    background: #bababa;
    font-size: 10px;
    font-weight: 400;
    line-height: 12px;
  }

  .titlebar {
    display: flex;
    align-items: center;
    flex: none;
    gap: 7px;
    height: 23px;
    padding-left: 6px;
    border-bottom: 1px solid #cfcfcf;
  }

  .titlebar i {
    width: 10px;
    height: 10px;
    box-sizing: border-box;
    border-radius: 50%;
    background: #c9c9c8;
    border: 1px solid #bdbdbc;
  }

  .titlebar h1 {
    flex: 1;
    margin: 0 57px 0 0;
    text-align: center;
    font-size: 11px;
    font-weight: 600;
    color: #9c989c;
  }

  .toolbar {
    display: flex;
    align-items: center;
    flex: none;
    height: 27px;
    padding-left: 3px;
  }

  .options {
    height: 29px;
    font-size: 11px;
  }

  .tool {
    position: relative;
    display: flex;
    align-items: center;
    justify-content: center;
    flex: none;
    width: 25px;
    height: 25px;
    margin: 1px;
  }

  .tool.on {
    background: #d1dcec;
    box-shadow: inset 0 0 0 1px #79abd6;
  }

  .tool.more::after {
    content: '';
    position: absolute;
    right: 0;
    bottom: 0;
    border: 3px solid #111;
    border-top-color: transparent;
    border-left-color: transparent;
  }

  .sep {
    flex: none;
    width: 1px;
    height: 18px;
    margin: 0 3px;
    background: #bdbdbd;
  }

  .sep.tight {
    margin: 0 2px;
  }

  .side .sep {
    width: 18px;
    height: 1px;
    margin: 3px 5px;
  }

  .side .sep.tight {
    margin: 2px 5px;
  }

  .picker {
    position: relative;
    display: block;
  }

  .picker select {
    display: block;
    width: 100%;
    height: 17px;
    padding: 0 14px 0 7px;
    appearance: none;
    border: 0;
    border-radius: 4px;
    background: #fff;
    box-shadow: 0 1px 1px rgba(0, 0, 0, 0.2);
    font: inherit;
    font-size: 11px;
    color: #1d1d1f;
  }

  .chevrons {
    position: absolute;
    right: 2px;
    top: 2px;
    fill: none;
    stroke: #222;
    stroke-width: 1.5;
    pointer-events: none;
  }

  .picker.blue .chevrons {
    stroke: #fff;
    background: #5fa0cf;
    border-radius: 3px;
  }

  .picker.blue select {
    padding-left: 5px;
  }

  .blank {
    position: absolute;
    left: 7px;
    right: 18px;
    top: 8px;
    height: 1px;
    background: #dcdcdc;
  }

  .variant {
    width: 84px;
    margin-left: 1px;
  }

  .track {
    width: 155px;
    margin-left: 1px;
  }

  .via {
    width: 150px;
    margin: 0 1px;
  }

  .grid-size {
    width: 167px;
  }

  .zoom {
    width: 97px;
  }

  .layer-box {
    display: flex;
    align-items: center;
    gap: 5px;
    width: 127px;
    height: 19px;
    margin: 0 3px 0 1px;
    padding-left: 4px;
    box-sizing: border-box;
    background: #fff;
    border: 1px solid #8a8a90;
  }

  .layer-box i {
    width: 10px;
    height: 10px;
    background: #c9c9c6;
    border: 1px solid #8a8a88;
  }

  .drop {
    display: flex;
    align-items: center;
    justify-content: center;
    width: 17px;
    height: 17px;
    margin-right: 2px;
    border-radius: 4px;
    background: #fff;
    box-shadow: 0 1px 1px rgba(0, 0, 0, 0.2);
  }

  .drop svg {
    fill: none;
    stroke: #222;
    stroke-width: 1.5;
  }

  .check {
    display: flex;
    align-items: center;
    gap: 5px;
    white-space: nowrap;
  }

  .check input {
    display: flex;
    align-items: center;
    justify-content: center;
    flex: none;
    width: 11px;
    height: 11px;
    margin: 0;
    appearance: none;
    border-radius: 3px;
    background: #fff;
    box-shadow: 0 0 1px 1px #d8d8d8;
  }

  .check input:checked::before {
    content: '';
    width: 3px;
    height: 7px;
    border: solid #1a1a1c;
    border-width: 0 2px 2px 0;
    transform: rotate(38deg);
  }

  .options .check {
    margin-left: 3px;
  }

  .workspace {
    display: flex;
    flex: 1;
    min-height: 0;
  }

  .properties {
    display: flex;
    flex-direction: column;
    width: 250px;
  }

  .properties h2 {
    padding-right: 3px;
  }

  .properties p {
    margin: 0;
    padding: 4px 4px 5px;
    line-height: 14px;
    font-size: 11px;
  }

  .sheet {
    flex: 1;
    margin: 0 1px 0 1px;
    background: #fff;
    border-bottom: 1px solid #cfcfcf;
  }

  .side {
    display: flex;
    flex-direction: column;
    flex: none;
    box-sizing: border-box;
    padding-top: 3px;
    overflow: hidden;
  }

  .side.left {
    width: 35px;
    padding-left: 6px;
  }

  .side.right {
    width: 36px;
    padding-left: 2px;
  }

  .canvas {
    flex: 1;
    min-width: 0;
    background: #001023;
    border-top: 1px solid #8e929c;
  }

  .appearance {
    display: flex;
    flex-direction: column;
    width: 172px;
    box-sizing: border-box;
    border-left: 1px solid #d4d4d4;
    background: #e7e7e7;
  }

  .tabs {
    display: grid;
    grid-template-columns: 48px 54px 1fr;
    flex: none;
    height: 17px;
    margin: 10px 15px 7px 14px;
    border-radius: 5px;
    background: #dcdcdc;
    box-shadow: 0 0 0 1px #d4d4d4;
  }

  .tabs .current {
    border-radius: 5px;
    background: #fff;
    box-shadow: 0 1px 1px rgba(0, 0, 0, 0.2);
  }

  .layer {
    display: flex;
    align-items: center;
    gap: 4px;
    height: 15px;
    padding-left: 8px;
    white-space: nowrap;
  }

  .swatch {
    flex: none;
    width: 13px;
    height: 10px;
    box-sizing: border-box;
    border: 0 solid;
    border-width: 0 1px;
  }

  .checker {
    flex: none;
  }

  .eye {
    flex: none;
    width: 14px;
    height: 14px;
  }

  .appearance .layer {
    position: relative;
    margin: 0 2px 0 0;
    padding-left: 14px;
  }

  .appearance .layer.active {
    background: #f7f7f7;
  }

  .layer.active::before {
    content: '';
    position: absolute;
    left: 5px;
    border: 4px solid transparent;
    border-left-color: #4b68a8;
  }

  .display-options {
    display: flex;
    align-items: center;
    gap: 1px;
    flex: none;
    height: 21px;
    margin-top: auto;
    padding-left: 10px;
    border-bottom: 1px solid #d9d9d9;
    background: #e3e3e3;
    color: #b0adb0;
    font-size: 10px;
  }

  .presets {
    display: flex;
    flex-direction: column;
    padding: 2px 5px 0 4px;
    line-height: 14px;
  }

  .presets .picker {
    margin: 1px 0 2px;
  }

  .grip {
    align-self: center;
    flex: none;
    width: 5px;
    height: 5px;
    margin: 2px 0 1px;
    border-radius: 50%;
    background: #cfcfcf;
  }

  .filters {
    display: grid;
    grid-template-columns: 83px 1fr;
    grid-auto-rows: 1fr;
    height: 94px;
    padding: 5px 0 3px 4px;
  }

  .counts {
    display: flex;
    gap: 26px;
    flex: none;
    height: 21px;
    margin: 0;
    padding: 1px 9px 0;
    font-size: 9px;
    line-height: 11px;
    color: #b3b1b3;
  }

  .counts dd {
    margin: 0;
  }

  .status {
    display: grid;
    grid-template-columns: 598fr 52fr 142fr 228fr 136fr 38fr 402fr;
    align-items: center;
    flex: none;
    height: 20px;
    padding-left: 4px;
    border-top: 1px solid #dadada;
    background: #f4f4f4;
    white-space: nowrap;
    font-size: 9px;
    color: #414143;
  }

  .status span {
    min-width: 0;
  }

  .viewer {
    position: absolute;
    left: 267px;
    right: 266px;
    top: 150px;
    bottom: 148px;
    display: flex;
    flex-direction: column;
    border-radius: 8px;
    overflow: hidden;
    background: #e8e8e8;
    box-shadow: 0 8px 28px rgba(0, 0, 0, 0.5);
  }

  .viewer .titlebar {
    height: 23px;
    background: #f3f3f3;
    border-bottom-color: #d9d9d9;
  }

  .viewer .titlebar h1 {
    color: #3c3a3c;
  }

  .viewer .titlebar .close {
    background: #a7626f;
    border-color: #a7626f;
  }

  .viewer .titlebar .minimise {
    background: #ffff45;
    border-color: #f0f03c;
  }

  .viewer .titlebar .zoom-btn {
    background: #64835f;
    border-color: #64835f;
  }

  .viewer .toolbar {
    height: 27px;
    border-bottom: 1px solid #b5b5bb;
  }

  .viewer-body {
    display: flex;
    flex: 1;
    min-height: 0;
  }

  .scene {
    flex: 1;
    min-width: 0;
    margin-left: 1px;
    background: linear-gradient(#cbcbe6, #66667f);
  }

  .ref {
    font-family: 'DejaVu Sans Mono', monospace;
    font-size: 35px;
    fill: #f2f2f2;
    text-anchor: middle;
  }

  .gizmo text {
    text-anchor: middle;
    font-weight: 600;
    fill: #15151c;
  }

  .splitter {
    align-self: stretch;
    display: flex;
    align-items: center;
    width: 5px;
    border-right: 1px solid #d6d6d6;
  }

  .splitter::before {
    content: '';
    width: 5px;
    height: 5px;
    border-radius: 50%;
    background: #cfcfcf;
  }

  .viewer-panel {
    display: flex;
    flex-direction: column;
    width: 158px;
  }

  .scroller {
    display: flex;
    flex: 1;
    min-height: 0;
  }

  .scroller ul {
    flex: 1;
    min-width: 0;
    padding-top: 7px;
    overflow: hidden;
  }

  .scroller .gap {
    height: 9px;
  }

  .scrollbar {
    width: 11px;
    margin: 4px 5px 1px 0;
    padding: 2px 0;
    box-sizing: border-box;
    background: #f8f8f8;
  }

  .scrollbar i {
    display: block;
    width: 6px;
    height: 76%;
    margin: 0 auto;
    border-radius: 3px;
    background: #77767d;
  }

  .stackup {
    margin: 0 2px;
    padding: 1px 2px 3px;
    border-bottom: 1px solid #d2d2d2;
  }

  .stackup .check {
    height: 18px;
  }

  .viewer-panel .presets {
    padding: 7px 5px 1px 4px;
  }

  .viewer-panel .presets .picker {
    margin: 3px 0 4px;
  }

  .viewer footer {
    flex: none;
    height: 23px;
    padding-left: 4px;
    border-top: 1px solid #bcbcc0;
    background: linear-gradient(#eaeaea, #d2d2d2);
    font-size: 9px;
    line-height: 23px;
    color: #4b4b4f;
  }
</style>
